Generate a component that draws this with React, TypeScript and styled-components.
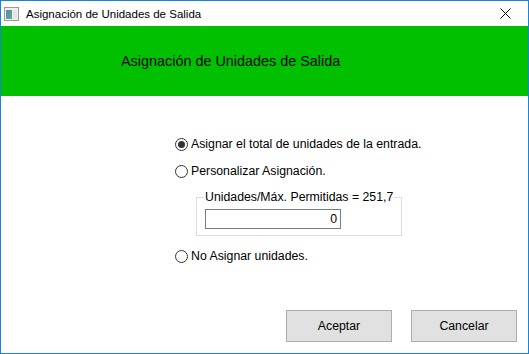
import React, { useState } from 'react';
import styled, { createGlobalStyle } from 'styled-components';

const GlobalStyle = createGlobalStyle`
  html, body {
    margin: 0;
    padding: 0;
    background: #ffffff;
  }
  body {
    font-family: 'Liberation Sans', Arial, sans-serif;
  }
`;

const Window = styled.div`
  width: 529px;
  height: 354px;
  box-sizing: border-box;
  border: 1px solid #1883d7;
  display: flex;
  flex-direction: column;
  background: #ffffff;
  overflow: hidden;
`;

const TitleBar = styled.div`
  height: 25px;
  display: flex;
  align-items: center;
  padding-left: 3px;
  background: #ffffff;
`;

const TitleText = styled.span`
  margin-left: 7px;
  font-size: 11.5px;
  color: #000000;
  flex: 1;
`;

const CloseButton = styled.div`
  width: 46px;
  height: 25px;
  display: flex;
  align-items: center;
  justify-content: center;
`;

const Header = styled.div`
  height: 70px;
  background: #00c000;
  display: flex;
  align-items: center;
  padding-left: 120px;
  font-size: 14.4px;
  color: #000000;
`;

const Content = styled.div`
  flex: 1;
  display: flex;
  flex-direction: column;
`;

const Options = styled.div`
  display: flex;
  flex-direction: column;
  padding: 40px 0 0 174px;
`;

const RadioRow = styled.label<{ $mt?: number }>`
  display: flex;
  align-items: center;
  height: 16px;
  margin-top: ${(p) => p.$mt ?? 0}px;
  font-size: 12.3px;
  color: #000000;
  cursor: default;
`;

const RadioCircle = styled.span<{ $checked: boolean }>`
  width: 13px;
  height: 13px;
  box-sizing: border-box;
  border: 1px solid #333333;
  border-radius: 50%;
  background: #ffffff;
  margin-right: 3px;
  display: flex;
  align-items: center;
  justify-content: center;

  &::after {
    content: '';
    width: 7px;
    height: 7px;
    border-radius: 50%;
    background: #333333;
    display: ${(p) => (p.$checked ? 'block' : 'none')};
  }
`;

const GroupBox = styled.fieldset`
  margin: 11px 0 0 21px;
  width: 206px;
  box-sizing: border-box;
  border: 1px solid #dcdcdc;
  padding: 0 0 6px 8px;
`;

const GroupLegend = styled.legend`
  font-size: 12.3px;
  padding: 0 1px;
  margin-left: -1px;
  color: #000000;
  line-height: 14px;
`;

const NumberBox = styled.input`
  display: block;
  margin-top: 5px;
  width: 136px;
  height: 20px;
  box-sizing: border-box;
  border: 1px solid #7a7a7a;
  padding: 0 3px;
  font-family: 'Liberation Sans', Arial, sans-serif;
  font-size: 12.3px;
  text-align: right;
  outline: none;
  color: #000000;
`;

const Footer = styled.div`
  margin-top: auto;
  display: flex;
  justify-content: flex-end;
  gap: 19px;
  padding: 0 11px 11px 0;
`;

const DialogButton = styled.button`
  width: 106px;
  height: 32px;
  background: #e1e1e1;
  border: 1px solid #adadad;
  font-family: 'Liberation Sans', Arial, sans-serif;
  font-size: 12.3px;
  color: #000000;
  padding: 0;
`;

const WindowIcon = () => (
  <svg width="15" height="14" viewBox="0 0 15 14">
    <defs>
      <linearGradient id="wg" x1="0" y1="0" x2="1" y2="1">
        <stop offset="0" stopColor="#4d8fb0" />
        <stop offset="1" stopColor="#6aa58a" />
      </linearGradient>
    </defs>
    <rect x="0.5" y="0.5" width="14" height="13" fill="#f0f0f0" stroke="#9a9a9a" />
    <rect x="2" y="3" width="6" height="9" fill="url(#wg)" />
    <rect x="9" y="3" width="4" height="9" fill="#dfe6ea" />
  </svg>
);

const CloseIcon = () => (
  <svg width="11" height="11" viewBox="0 0 11 11">
    <path d="M0.5 0.5 L10.5 10.5 M10.5 0.5 L0.5 10.5" stroke="#000" strokeWidth="1" />
  </svg>
);

const options = [
  'Asignar el total de unidades de la entrada.',
  'Personalizar Asignación.',
  'No Asignar unidades.',
];

export default function App() {
  const [selected, setSelected] = useState(0);
  const [units, setUnits] = useState('0');

  return (
    <>
      <GlobalStyle />
      <Window>
        <TitleBar>
          <WindowIcon />
          <TitleText>Asignación de Unidades de Salida</TitleText>
          <CloseButton>
            <CloseIcon />
          </CloseButton>
        </TitleBar>
        <Header>Asignación de Unidades de Salida</Header>
        <Content>
          <Options>
            <RadioRow onClick={() => setSelected(0)}>
              <RadioCircle $checked={selected === 0} />
              {options[0]}
            </RadioRow>
            <RadioRow $mt={11} onClick={() => setSelected(1)}>
              <RadioCircle $checked={selected === 1} />
              {options[1]}
            </RadioRow>
            <GroupBox>
              <GroupLegend>Unidades/Máx. Permitidas = 251,7</GroupLegend>
              <NumberBox value={units} onChange={(e) => setUnits(e.target.value)} />
            </GroupBox>
            <RadioRow $mt={12} onClick={() => setSelected(2)}>
              <RadioCircle $checked={selected === 2} />
              {options[2]}
            </RadioRow>
          </Options>
          <Footer>
            <DialogButton>Aceptar</DialogButton>
            <DialogButton>Cancelar</DialogButton>
          </Footer>
        </Content>
      </Window>
    </>
  );
}
